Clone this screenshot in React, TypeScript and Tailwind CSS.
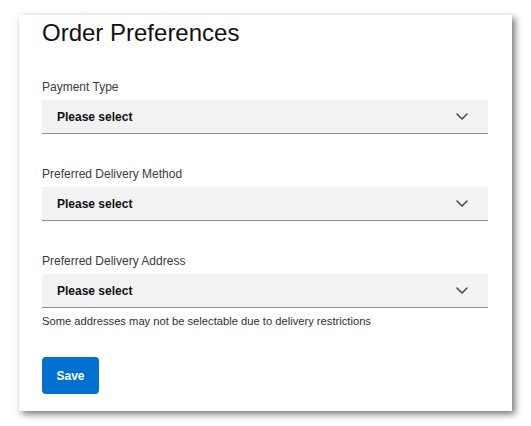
import React from 'react';

const font = { fontFamily: '"Liberation Sans", Arial, sans-serif' };

const fields = [
  { label: 'Payment Type', note: '' },
  { label: 'Preferred Delivery Method', note: '' },
  {
    label: 'Preferred Delivery Address',
    note: 'Some addresses may not be selectable due to delivery restrictions',
  },
];

const Chevron = () => (
  <svg width="12" height="7" viewBox="0 0 12 7" fill="none" className="text-[#46474a]">
    <path d="M1 1l5 5 5-5" stroke="currentColor" strokeWidth="1.5" strokeLinecap="round" strokeLinejoin="round" />
  </svg>
);

const App = () => {
  return (
    <div className="w-[531px] h-[426px] bg-white pl-[19px] pt-[15px]" style={font}>
      <div className="w-[493px] h-[396px] bg-white shadow-[3px_3px_7px_rgba(0,0,0,0.55)] pl-[23px] pr-[24px]">
        <h1 className="text-[24px] leading-[32px] pt-[2px] text-[#111]">Order Preferences</h1>

        <div className="mt-[30px] flex flex-col">
          {fields.map((f, i) => (
            <div key={f.label} className={i > 0 ? 'mt-[32px]' : ''}>
              <div className="text-[12px] leading-[16px] text-[#3a3a3a]">{f.label}</div>
              <div className="mt-[5px] h-[34px] bg-[#f2f2f2] border-b border-[#909090] flex items-center justify-between pl-[15px] pr-[20px]">
                <span className="text-[12px] font-bold text-[#111]">Please select</span>
                <Chevron />
              </div>
              {f.note && (
                <div className="mt-[5px] text-[11.2px] leading-[16px] text-[#2e2f32]">{f.note}</div>
              )}
            </div>
          ))}
        </div>

        <button className="mt-[28px] w-[57px] h-[37px] rounded-[4px] bg-[#0071ce] text-white text-[12px] font-bold">
          Save
        </button>
      </div>
    </div>
  );
};

export default App;
